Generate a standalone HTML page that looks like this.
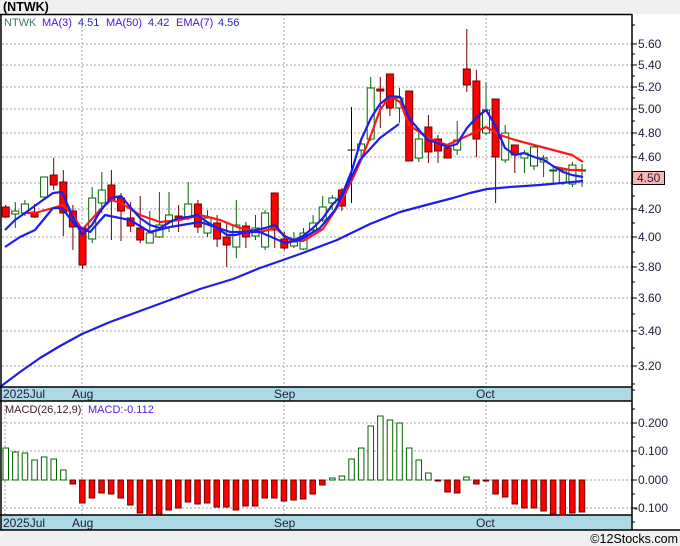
<!DOCTYPE html>
<html><head><meta charset="utf-8"><style>
body{margin:0;width:680px;height:546px;background:#f0f0f0;overflow:hidden;font-family:"Liberation Sans",Tahoma,sans-serif}
svg{display:block}
text{font-family:"Liberation Sans",sans-serif}
</style></head><body>
<svg width="680" height="546" viewBox="0 0 680 546">
<rect x="0" y="0" width="680" height="546" fill="#f0f0f0"/>
<rect x="1" y="14" width="679" height="516" fill="#fff"/>
<text x="3" y="11" font-size="12.5" font-weight="bold" fill="#000">(NTWK)</text>
<g stroke="#a0a0a0" stroke-dasharray="2,2" stroke-width="1">
<line x1="2" x2="632" y1="44" y2="44"/><line x1="2" x2="632" y1="65" y2="65"/><line x1="2" x2="632" y1="87" y2="87"/><line x1="2" x2="632" y1="109" y2="109"/><line x1="2" x2="632" y1="133" y2="133"/><line x1="2" x2="632" y1="157" y2="157"/><line x1="2" x2="632" y1="183" y2="183"/><line x1="2" x2="632" y1="209" y2="209"/><line x1="2" x2="632" y1="237" y2="237"/><line x1="2" x2="632" y1="267" y2="267"/><line x1="2" x2="632" y1="298" y2="298"/><line x1="2" x2="632" y1="331" y2="331"/><line x1="2" x2="632" y1="366" y2="366"/>
<line x1="82" x2="82" y1="14" y2="387"/><line x1="284" x2="284" y1="14" y2="387"/><line x1="486" x2="486" y1="14" y2="387"/>
<line x1="2" x2="632" y1="423" y2="423"/><line x1="2" x2="632" y1="451" y2="451"/><line x1="2" x2="632" y1="480" y2="480"/><line x1="2" x2="632" y1="508" y2="508"/>
<line x1="82" x2="82" y1="401" y2="515"/><line x1="284" x2="284" y1="401" y2="515"/><line x1="486" x2="486" y1="401" y2="515"/><line x1="5" x2="5" y1="401" y2="515"/>
</g>
<text font-size="11" y="26"><tspan x="4" fill="#3a7a6a">NTWK</tspan><tspan x="42" fill="#5010e0">MA(3)</tspan><tspan x="78" fill="#2828b8">4.51</tspan><tspan x="106" fill="#5010e0">MA(50)</tspan><tspan x="148" fill="#2828b8">4.42</tspan><tspan x="176" fill="#5010e0">EMA(7)</tspan><tspan x="218" fill="#2828b8">4.56</tspan></text>
<!-- candles -->
<g stroke-width="1">
<g stroke="#700000" fill="#ff0000">
<line x1="5.7" x2="5.7" y1="205" y2="218"/><rect x="2.2" y="207" width="7" height="10"/>
<line x1="34.5" x2="34.5" y1="204" y2="218"/><rect x="31" y="212" width="7" height="5"/>
<line x1="53.7" x2="53.7" y1="158" y2="190"/><rect x="50.2" y="175" width="7" height="10"/>
<line x1="63.3" x2="63.3" y1="170" y2="236"/><rect x="59.8" y="182" width="7" height="31"/>
<line x1="72.9" x2="72.9" y1="205" y2="250"/><rect x="69.4" y="211" width="7" height="16"/>
<line x1="82.5" x2="82.5" y1="228" y2="269"/><rect x="79" y="228" width="7" height="37"/>
<line x1="111.4" x2="111.4" y1="170" y2="240"/><rect x="107.9" y="185" width="7" height="16"/>
<line x1="121" x2="121" y1="193" y2="241"/><rect x="117.5" y="198" width="7" height="13"/>
<line x1="130.6" x2="130.6" y1="202" y2="232"/><rect x="127.1" y="218" width="7" height="8"/>
<line x1="140.2" x2="140.2" y1="196" y2="243"/><rect x="136.7" y="228" width="7" height="12"/>
<line x1="178.6" x2="178.6" y1="205" y2="232"/><rect x="175.1" y="216" width="7" height="3"/>
<line x1="197.9" x2="197.9" y1="200" y2="233"/><rect x="194.4" y="204" width="7" height="23"/>
<line x1="217.1" x2="217.1" y1="215" y2="247"/><rect x="213.6" y="223" width="7" height="16"/>
<line x1="226.7" x2="226.7" y1="222" y2="267"/><rect x="223.2" y="237" width="7" height="8"/>
<line x1="245.9" x2="245.9" y1="222" y2="248"/><rect x="242.4" y="226" width="7" height="11"/>
<line x1="274.7" x2="274.7" y1="193" y2="248"/><rect x="271.2" y="193" width="7" height="37"/>
<line x1="284.3" x2="284.3" y1="232" y2="250"/><rect x="280.8" y="239" width="7" height="9"/>
<line x1="341.9" x2="341.9" y1="188" y2="211"/><rect x="338.4" y="190" width="7" height="16"/>
<line x1="380.3" x2="380.3" y1="77" y2="128"/><rect x="376.8" y="89" width="7" height="2"/>
<line x1="389.9" x2="389.9" y1="74" y2="116"/><rect x="386.4" y="74" width="7" height="34"/>
<line x1="409.2" x2="409.2" y1="91" y2="161"/><rect x="405.7" y="91" width="7" height="70"/>
<line x1="428.4" x2="428.4" y1="115" y2="163"/><rect x="424.9" y="127" width="7" height="25"/>
<line x1="438" x2="438" y1="135" y2="163"/><rect x="434.5" y="139" width="7" height="12"/>
<line x1="447.6" x2="447.6" y1="148" y2="158"/><rect x="444.1" y="148" width="7" height="10"/>
<line x1="466.8" x2="466.8" y1="29" y2="92"/><rect x="463.3" y="69" width="7" height="16"/>
<line x1="476.4" x2="476.4" y1="70" y2="157"/><rect x="472.9" y="81" width="7" height="58"/>
<line x1="495.6" x2="495.6" y1="99" y2="203"/><rect x="492.1" y="99" width="7" height="58"/>
<line x1="514.8" x2="514.8" y1="145" y2="173"/><rect x="511.3" y="145" width="7" height="10"/>
</g>
<g stroke="#006400" fill="#fff">
<line x1="15.3" x2="15.3" y1="202" y2="228"/><rect x="11.8" y="211" width="7" height="3"/>
<line x1="24.9" x2="24.9" y1="200" y2="216"/><rect x="21.4" y="204" width="7" height="9"/>
<line x1="44.1" x2="44.1" y1="177" y2="197"/><rect x="40.6" y="177" width="7" height="20"/>
<line x1="92.2" x2="92.2" y1="187" y2="243"/><rect x="88.7" y="198" width="7" height="41"/>
<line x1="101.8" x2="101.8" y1="172" y2="213"/><rect x="98.3" y="190" width="7" height="13"/>
<line x1="149.8" x2="149.8" y1="211" y2="243"/><rect x="146.3" y="233" width="7" height="10"/>
<line x1="159.4" x2="159.4" y1="192" y2="238"/><rect x="155.9" y="225" width="7" height="12"/>
<line x1="169" x2="169" y1="192" y2="232"/><rect x="165.5" y="215" width="7" height="12"/>
<line x1="188.2" x2="188.2" y1="182" y2="220"/><rect x="184.7" y="204" width="7" height="14"/>
<line x1="207.5" x2="207.5" y1="210" y2="237"/><rect x="204" y="218" width="7" height="15"/>
<line x1="236.3" x2="236.3" y1="200" y2="258"/><rect x="232.8" y="225" width="7" height="22"/>
<line x1="255.5" x2="255.5" y1="215" y2="240"/><rect x="252" y="228" width="7" height="8"/>
<line x1="265.1" x2="265.1" y1="210" y2="250"/><rect x="261.6" y="213" width="7" height="34"/>
<line x1="293.9" x2="293.9" y1="232" y2="248"/><rect x="290.4" y="242" width="7" height="4"/>
<line x1="303.5" x2="303.5" y1="228" y2="250"/><rect x="300" y="233" width="7" height="16"/>
<line x1="313.1" x2="313.1" y1="215" y2="232"/><rect x="309.6" y="223" width="7" height="7"/>
<line x1="322.7" x2="322.7" y1="196" y2="222"/><rect x="319.2" y="207" width="7" height="13"/>
<line x1="332.3" x2="332.3" y1="195" y2="210"/><rect x="328.8" y="198" width="7" height="5"/>
<line x1="361.1" x2="361.1" y1="138" y2="160"/><rect x="357.6" y="144" width="7" height="6"/>
<line x1="370.7" x2="370.7" y1="77" y2="141"/><rect x="367.2" y="88" width="7" height="51"/>
<line x1="399.5" x2="399.5" y1="88" y2="123"/><rect x="396" y="98" width="7" height="10"/>
<line x1="418.8" x2="418.8" y1="128" y2="162"/><rect x="415.3" y="139" width="7" height="19"/>
<line x1="457.2" x2="457.2" y1="121" y2="155"/><rect x="453.7" y="140" width="7" height="10"/>
<line x1="486" x2="486" y1="82" y2="135"/><rect x="482.5" y="110" width="7" height="23"/>
<line x1="505.2" x2="505.2" y1="125" y2="163"/><rect x="501.7" y="133" width="7" height="27"/>
<line x1="524.4" x2="524.4" y1="150" y2="173"/><rect x="520.9" y="153" width="7" height="5"/>
<line x1="534" x2="534" y1="145" y2="170"/><rect x="530.5" y="147" width="7" height="19"/>
<line x1="543.6" x2="543.6" y1="155" y2="177"/><rect x="540.1" y="158" width="7" height="4"/>
<line x1="553.2" x2="553.2" y1="167" y2="185"/><rect x="549.7" y="170" width="7" height="1"/>
<line x1="562.8" x2="562.8" y1="168" y2="185"/><rect x="559.3" y="170" width="7" height="13"/>
<line x1="572.4" x2="572.4" y1="162" y2="187"/><rect x="568.9" y="165" width="7" height="19"/>
<line x1="582" x2="582" y1="164" y2="187"/><rect x="578.5" y="170" width="7" height="1"/>
</g>
<line x1="351.5" x2="351.5" y1="107" y2="203" stroke="#000"/><line x1="347.5" x2="355.5" y1="150" y2="150" stroke="#000"/>
</g>
<!-- MAs -->
<g fill="none" stroke-width="2.2" stroke-linejoin="round">
<polyline stroke="#1e1ee8" points="0,387 20,372 40,358 60,346 82,334 110,322 140,311 170,300 200,289 233,279 260,268 283,260 300,254 337,240 370,224 400,212 430,204 453,198 470,193 487,189 510,187 540,185 583,181"/>
<polyline stroke="#ff1a1a" points="25,213 35,213 53,208 63,205 73,215 82,230 100,210 111,200 121,203 140,215 160,222 180,220 200,215 220,220 240,228 260,232 275,228 290,240 303,241 323,229 342,200 352,180 361,160 371,135 380,110 390,96 400,102 409,125 428,138 447,145 467,136 486,127 500,135 515,140 534,145 553,150 572,155 583,162"/>
<polyline stroke="#ff1a1a" points="555,167 570,170 583,170"/>
<polyline stroke="#1e1ee8" points="5,247 20,237 35,230 53,208 62,208 75,225 90,232 105,215 130,220 150,232 170,227 200,222 230,232 260,232 285,243 300,240 320,228 335,210 345,190 360,160 380,138 399,124"/>
<polyline stroke="#1e1ee8" points="5,230 15,220 25,213 43,200 53,193 62,192 72,215 82,235 92,225 101,210 111,198 121,196 131,208 140,218 150,225 160,228 170,222 179,218 188,217 198,215 207,222 217,228 227,235 236,235 246,232 256,230 265,228 275,225 284,236 294,240 303,236 313,228 323,218 332,205 342,195 352,170 361,140 371,118 380,104 390,96 400,97 409,118 419,130 428,140 438,143 447,147 457,144 467,128 476,118 486,110 495,125 505,148 515,155 524,153 534,157 544,160 553,166 563,172 572,175 583,177"/>
</g>
<!-- date bars -->
<rect x="1" y="387" width="631" height="14" fill="#add8e6"/>
<rect x="1" y="515" width="631" height="15" fill="#add8e6"/>
<g stroke="#000" stroke-width="1.5">
<line x1="0" x2="632" y1="14.5" y2="14.5"/>
<line x1="0" x2="632" y1="387" y2="387"/><line x1="0" x2="632" y1="401" y2="401"/>
<line x1="0" x2="632" y1="515" y2="515"/><line x1="0" x2="680" y1="530" y2="530"/>
<line x1="1" x2="1" y1="14" y2="530"/><line x1="632" x2="632" y1="14" y2="530"/>
</g>
<g fill="#202040" font-size="12"><text x="3" y="398">2025Jul</text><text x="72" y="398">Aug</text><text x="274" y="398">Sep</text><text x="476" y="398">Oct</text>
<text x="3" y="527">2025Jul</text><text x="72" y="527">Aug</text><text x="274" y="527">Sep</text><text x="476" y="527">Oct</text></g>
<!-- right axis -->
<g stroke="#000" stroke-width="1">
<line x1="632" x2="637" y1="44" y2="44"/><line x1="632" x2="637" y1="65" y2="65"/><line x1="632" x2="637" y1="87" y2="87"/><line x1="632" x2="637" y1="109" y2="109"/><line x1="632" x2="637" y1="133" y2="133"/><line x1="632" x2="637" y1="157" y2="157"/><line x1="632" x2="637" y1="183" y2="183"/><line x1="632" x2="637" y1="209" y2="209"/><line x1="632" x2="637" y1="237" y2="237"/><line x1="632" x2="637" y1="267" y2="267"/><line x1="632" x2="637" y1="298" y2="298"/><line x1="632" x2="637" y1="331" y2="331"/><line x1="632" x2="637" y1="366" y2="366"/>
<line x1="632" x2="635" y1="25" y2="25"/><line x1="632" x2="635" y1="54" y2="54"/><line x1="632" x2="635" y1="76" y2="76"/><line x1="632" x2="635" y1="98" y2="98"/><line x1="632" x2="635" y1="121" y2="121"/><line x1="632" x2="635" y1="145" y2="145"/><line x1="632" x2="635" y1="196" y2="196"/><line x1="632" x2="635" y1="223" y2="223"/><line x1="632" x2="635" y1="252" y2="252"/><line x1="632" x2="635" y1="282" y2="282"/><line x1="632" x2="635" y1="314" y2="314"/><line x1="632" x2="635" y1="348" y2="348"/><line x1="632" x2="635" y1="384" y2="384"/>
<line x1="632" x2="637" y1="423" y2="423"/><line x1="632" x2="637" y1="451" y2="451"/><line x1="632" x2="637" y1="480" y2="480"/><line x1="632" x2="637" y1="508" y2="508"/>
<line x1="632" x2="635" y1="409" y2="409"/><line x1="632" x2="635" y1="437" y2="437"/><line x1="632" x2="635" y1="466" y2="466"/><line x1="632" x2="635" y1="494" y2="494"/><line x1="632" x2="635" y1="522" y2="522"/><line x1="632" x2="635" y1="390" y2="390"/>
</g>
<g fill="#202040" font-size="12">
<text x="638" y="48">5.60</text><text x="638" y="69">5.40</text><text x="638" y="91">5.20</text><text x="638" y="113">5.00</text><text x="638" y="137">4.80</text><text x="638" y="161">4.60</text><text x="638" y="213">4.20</text><text x="638" y="241">4.00</text><text x="638" y="271">3.80</text><text x="638" y="302">3.60</text><text x="638" y="335">3.40</text><text x="638" y="370">3.20</text>
<text x="638" y="427">0.200</text><text x="638" y="455">0.100</text><text x="638" y="484">0.000</text><text x="634" y="512">-0.100</text>
</g>
<rect x="632.5" y="171.5" width="32" height="13" fill="#ffb4b4" stroke="#000"/>
<text x="637" y="182" font-size="12" fill="#202040">4.50</text>
<!-- MACD -->
<text font-size="11" y="413"><tspan x="5" fill="#402030">MACD(26,12,9)</tspan><tspan x="88" fill="#5020e0">MACD:-0.112</tspan></text>
<g stroke="#006400" fill="#fff">
<rect x="3" y="448" width="5.5" height="32"/><rect x="12.6" y="452" width="5.5" height="28"/><rect x="22.2" y="453" width="5.5" height="27"/><rect x="31.8" y="460" width="5.5" height="20"/><rect x="41.4" y="457" width="5.5" height="23"/><rect x="51" y="459" width="5.5" height="21"/><rect x="60.6" y="470" width="5.5" height="10"/>
<rect x="329.6" y="478" width="5.5" height="2"/><rect x="339.2" y="476" width="5.5" height="4"/><rect x="348.8" y="459" width="5.5" height="21"/><rect x="358.4" y="448" width="5.5" height="32"/><rect x="368" y="426" width="5.5" height="54"/><rect x="377.6" y="416" width="5.5" height="64"/><rect x="387.2" y="420" width="5.5" height="60"/><rect x="396.8" y="423" width="5.5" height="57"/><rect x="406.4" y="448" width="5.5" height="32"/><rect x="416" y="460" width="5.5" height="20"/><rect x="425.6" y="473" width="5.5" height="7"/><rect x="463.7" y="477" width="5.5" height="3"/>
</g>
<g stroke="#700000" fill="#ff0000">
<rect x="70" y="480" width="5.5" height="4"/><rect x="79.6" y="480" width="5.5" height="23"/><rect x="89.2" y="480" width="5.5" height="18"/><rect x="98.8" y="480" width="5.5" height="13"/><rect x="108.4" y="480" width="5.5" height="14"/><rect x="118" y="480" width="5.5" height="18"/><rect x="127.6" y="480" width="5.5" height="25"/><rect x="137.2" y="480" width="5.5" height="33"/><rect x="146.8" y="480" width="5.5" height="35"/><rect x="156.4" y="480" width="5.5" height="34"/><rect x="166" y="480" width="5.5" height="30"/><rect x="175.6" y="480" width="5.5" height="28"/><rect x="185.2" y="480" width="5.5" height="22"/><rect x="194.8" y="480" width="5.5" height="24"/><rect x="204.4" y="480" width="5.5" height="23"/><rect x="214" y="480" width="5.5" height="27"/><rect x="223.6" y="480" width="5.5" height="27"/><rect x="233.2" y="480" width="5.5" height="30"/><rect x="242.8" y="480" width="5.5" height="26"/><rect x="252.4" y="480" width="5.5" height="26"/><rect x="262" y="480" width="5.5" height="18"/><rect x="271.6" y="480" width="5.5" height="18"/><rect x="281.2" y="480" width="5.5" height="21"/><rect x="290.8" y="480" width="5.5" height="20"/><rect x="300.4" y="480" width="5.5" height="19"/><rect x="310" y="480" width="5.5" height="14"/><rect x="319.6" y="480" width="5.5" height="5"/>
<rect x="435.2" y="480" width="5.5" height="1"/><rect x="444.8" y="480" width="5.5" height="12"/><rect x="454.4" y="480" width="5.5" height="13"/><rect x="473.6" y="480" width="5.5" height="4"/><rect x="483.2" y="480" width="5.5" height="1"/><rect x="492.8" y="480" width="5.5" height="14"/><rect x="502.4" y="480" width="5.5" height="17"/><rect x="512" y="480" width="5.5" height="24"/><rect x="521.6" y="480" width="5.5" height="28"/><rect x="531.2" y="480" width="5.5" height="28"/><rect x="540.8" y="480" width="5.5" height="31"/><rect x="550.4" y="480" width="5.5" height="34"/><rect x="560" y="480" width="5.5" height="35"/><rect x="569.6" y="480" width="5.5" height="33"/><rect x="579.2" y="480" width="5.5" height="32"/>
</g>
<rect x="0" y="531" width="680" height="15" fill="#f0f0f0"/>
<text x="678" y="543" font-size="12.5" text-anchor="end" fill="#000">©12Stocks.com</text>
</svg>
</body></html>
